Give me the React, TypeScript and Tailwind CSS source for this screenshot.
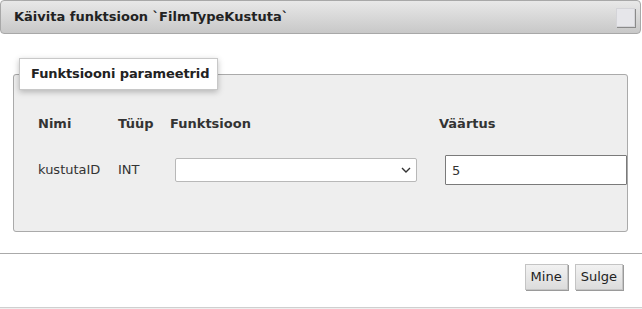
import React from 'react';

export default function App() {
  return (
    <div className="w-[642px] h-[309px] bg-white font-['DejaVu_Sans',sans-serif] text-[13px] text-[#333] overflow-hidden">
      {/* Title bar */}
      <div className="h-[34px] mr-[1px] flex items-center justify-between pl-[13px] pr-[5px] border border-[#a8a8a8] rounded-[4px] bg-gradient-to-b from-[#e8e8e8] to-[#c8c8c8]">
        <span className="font-bold text-[#222]">Käivita funktsioon `FilmTypeKustuta`</span>
        <button className="w-[19px] h-[19px] bg-[#e6e6ea] border border-[#d4d4d8] shadow-[1px_1px_0_#8a8a8a]" />
      </div>

      {/* Parameters */}
      <fieldset className="ml-[13px] mt-[24px] w-[615px] pl-[5px] pr-0 pb-[46px] border border-[#aaa] rounded-[3px] bg-[#eeeeee]">
        <legend className="h-[32px] pl-[11px] pr-[8px] flex items-center bg-white border border-[#c8c8c8] shadow-[0_2px_6px_rgba(0,0,0,0.25)] font-bold text-[#222] tracking-[-0.1px]">
          Funktsiooni parameetrid
        </legend>
        <div className="pl-[19px] mt-[24px] grid grid-cols-[80px_52px_269px_184px] items-center">
          <div className="font-bold h-[20px] leading-[20px]">Nimi</div>
          <div className="font-bold h-[20px] leading-[20px]">Tüüp</div>
          <div className="font-bold h-[20px] leading-[20px]">Funktsioon</div>
          <div className="font-bold h-[20px] leading-[20px]">Väärtus</div>

          <div className="mt-[21px]">kustutaID</div>
          <div className="mt-[21px]">INT</div>
          <div className="mt-[21px] pl-[5px]">
            <div className="relative w-[242px] h-[24px]">
              <select className="appearance-none w-full h-full bg-white border border-[#b8b8b8] rounded-[2px] outline-none" />
              <svg className="absolute right-[6px] top-[9px] pointer-events-none" width="10" height="6" viewBox="0 0 10 6">
                <path d="M1 1 L5 5 L9 1" fill="none" stroke="#333" strokeWidth="1.4" />
              </svg>
            </div>
          </div>
          <div className="mt-[21px] pl-[6px]">
            <input
              defaultValue="5"
              className="w-[182px] h-[30px] px-[6px] bg-white border border-[#7a7a7a] rounded-[1px] outline-none text-[#333]"
            />
          </div>
        </div>
      </fieldset>

      {/* Footer */}
      <div className="mt-[21px] border-t border-[#aaa] pt-[10px] pb-[17px] pr-[19px] flex justify-end gap-[7px]">
        <button className="h-[26px] px-[5px] bg-gradient-to-b from-[#f2f2f2] to-[#dcdcdc] border border-[#c4c4c4] shadow-[1px_1px_0_#9a9a9a] text-[#222]">
          Mine
        </button>
        <button className="h-[26px] px-[5px] bg-gradient-to-b from-[#f2f2f2] to-[#dcdcdc] border border-[#c4c4c4] shadow-[1px_1px_0_#9a9a9a] text-[#222]">
          Sulge
        </button>
      </div>
      <div className="border-t border-[#cfcfcf] bg-[#efefef] h-[10px]" />
    </div>
  );
}
